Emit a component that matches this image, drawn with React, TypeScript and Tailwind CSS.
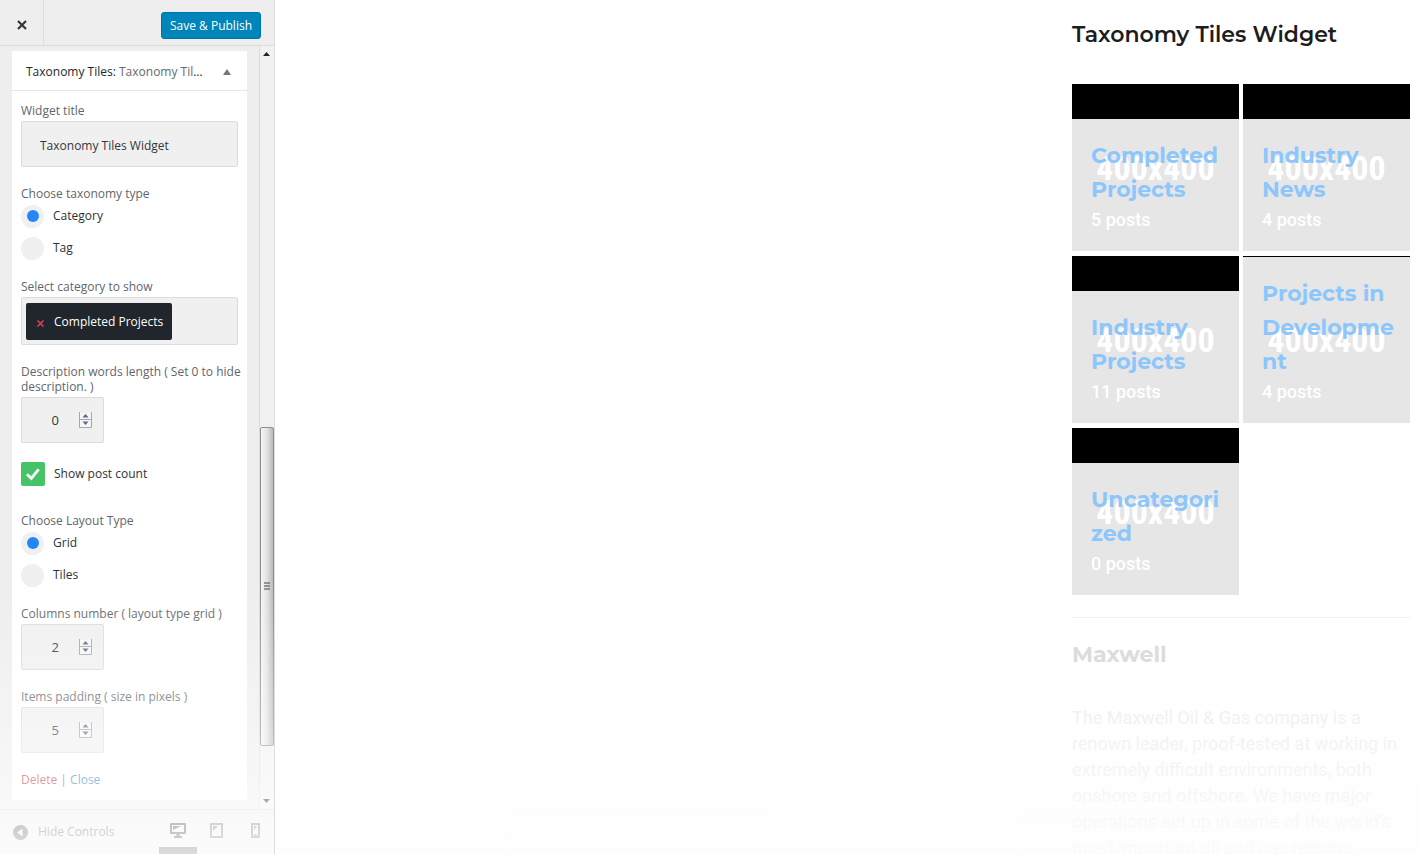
import { useState, type ReactNode } from "react";

const labelClass = "block text-xs leading-[15px] whitespace-pre text-[#5f666c]";
const fieldClass = "rounded-xs border border-[#dcdcdc] bg-[#f0f0f0]";

function Field({ label, htmlFor, children }: { label: string; htmlFor: string; children: ReactNode }) {
  return (
    <div className="flex flex-col gap-[3px]">
      <label htmlFor={htmlFor} className={labelClass}>
        {label}
      </label>
      {children}
    </div>
  );
}

function RadioGroup({ legend, name, options }: { legend: string; name: string; options: string[] }) {
  return (
    <fieldset>
      <legend className={labelClass}>{legend}</legend>
      <div className="flex flex-col gap-2 pt-[3px]">
        {options.map((option, index) => (
          <label key={option} className="flex h-6 items-center gap-[9px] text-xs text-[#2c3338]">
            <input
              type="radio"
              name={name}
              defaultChecked={index === 0}
              className="grid size-[23px] appearance-none place-items-center rounded-full bg-[#f0f0f0] before:size-3 before:rounded-full checked:before:bg-[#2388f5]"
            />
            {option}
          </label>
        ))}
      </div>
    </fieldset>
  );
}

function NumberField({ label, id, value }: { label: string; id: string; value: number }) {
  return (
    <Field label={label} htmlFor={id}>
      <div className={`flex h-[46px] w-[83px] items-center pr-[11px] ${fieldClass}`}>
        <input
          id={id}
          type="number"
          defaultValue={value}
          className="min-w-0 flex-1 bg-transparent pt-0.5 pr-5 text-right text-[13px] text-[#32373c] outline-none [appearance:textfield] [&::-webkit-inner-spin-button]:appearance-none"
        />
        <svg width="13" height="16" viewBox="0 0 13 16" aria-hidden="true">
          <rect x="1" y="1" width="11" height="14" fill="#f6f6f6" />
          <path d="M.5 0v15.5h12V0M0 7.5h13" fill="none" stroke="#a3a8ae" />
          <path d="M3.5 5.5h6l-3-3.5zM3.5 9.5h6l-3 3.5z" fill="#5a6a8c" />
        </svg>
      </div>
    </Field>
  );
}

function ScrollTrack() {
  return (
    <div className="flex w-[15px] shrink-0 flex-col items-center border-l border-[#dcdcdc] bg-[#f1f1f1]" aria-hidden="true">
      <svg className="my-[5px] shrink-0" width="8" height="5" viewBox="0 0 8 5">
        <path d="M0 5h7L3.500 1z" fill="#222" />
      </svg>
      <div className="grow-[367] basis-0" />
      <div className="flex w-full grow-[319] basis-0 items-center justify-center rounded-xs border border-[#8f8f8f] bg-linear-to-r from-[#f6f6f6] via-[#e2e2e2] to-[#b9b9b9]">
        <svg width="6" height="8" viewBox="0 0 6 8">
          <path d="M0 1h6M0 4h6M0 7h6" stroke="#444" />
        </svg>
      </div>
      <div className="grow-[48] basis-0" />
      <svg className="my-[5px] shrink-0" width="8" height="5" viewBox="0 0 8 5">
        <path d="M0 0h7L3.500 4z" fill="#222" />
      </svg>
    </div>
  );
}

function Sidebar() {
  const [title, setTitle] = useState("Taxonomy Tiles Widget");
  return (
    <aside className="relative flex w-[275px] shrink-0 flex-col border-r border-[#ddd] bg-[#eee] font-['Open_Sans','Noto_Sans',sans-serif]">
      <header className="flex h-[46px] shrink-0 items-center justify-between border-b border-[#ddd] pr-[13px]">
        <button aria-label="Close" className="grid h-full w-11 place-items-center border-r border-[#ddd] pt-1">
          <svg width="10" height="10" viewBox="0 0 10 10" fill="none" stroke="#32373c" strokeWidth="2.200">
            <path d="M1 1l8 8M9 1L1 9" />
          </svg>
        </button>
        <button className="mt-[6px] h-[27px] rounded-[3px] border border-[#0073aa] bg-[#0085ba] px-2 text-xs font-medium whitespace-nowrap text-white">
          Save &amp; Publish
        </button>
      </header>

      <div className="flex min-h-0 flex-1">
        <div className="min-w-0 flex-1 overflow-hidden pt-[5px] pr-3 pl-3">
          <section className="bg-white">
            <button className="flex h-10 w-full items-center justify-between border-b border-[#e5e5e5] pt-0.5 pr-4 pl-[14px] text-xs text-[#23282d]">
              <span className="w-[181px] truncate text-left font-medium">
                Taxonomy Tiles: <span className="font-normal text-[#646970]">Taxonomy Tiles Widget</span>
              </span>
              <svg width="8" height="6" viewBox="0 0 8 6">
                <path d="M0 6h8L4 0z" fill="#72777c" />
              </svg>
            </button>
            <form className="flex flex-col gap-[19px] px-[9px] pt-3 pb-[13px]">
              <Field label="Widget title" htmlFor="widget-title">
                <input
                  id="widget-title"
                  value={title}
                  onChange={(event) => setTitle(event.target.value)}
                  className={`h-[46px] w-full px-[18px] pt-0.5 text-xs text-[#32373c] outline-none ${fieldClass}`}
                />
              </Field>
              <RadioGroup legend="Choose taxonomy type" name="taxonomy" options={["Category", "Tag"]} />
              <Field label="Select category to show" htmlFor="category">
                <div className={`flex h-12 items-center px-1 ${fieldClass}`}>
                  <button
                    id="category"
                    type="button"
                    className="flex h-[37px] items-center gap-[10px] rounded-xs bg-[#20262b] pt-0.5 pr-[9px] pl-[11px] text-xs whitespace-nowrap text-white"
                  >
                    <svg className="mt-0.5" width="7" height="7" viewBox="0 0 7 7" stroke="#e0405a" strokeWidth="1.500">
                      <path d="M.5.5l6 6M6.500.5l-6 6" />
                    </svg>
                    Completed Projects
                  </button>
                </div>
              </Field>
              <NumberField label={"Description words length ( Set 0 to hide\ndescription. )"} id="words" value={0} />
              <label className="mb-2 flex h-6 items-center gap-[9px] text-xs text-[#2c3338]">
                <span className="grid">
                  <input
                    type="checkbox"
                    defaultChecked
                    className="peer col-start-1 row-start-1 size-6 appearance-none rounded-xs bg-[#f0f0f0] checked:bg-[#46c267]"
                  />
                  <svg
                    className="pointer-events-none invisible col-start-1 row-start-1 place-self-center peer-checked:visible"
                    width="14"
                    height="13"
                    viewBox="0 0 14 13"
                  >
                    <path d="M0 7.300l2-2 3.200 2.900L11.500.4l2.300 1.500L5.500 12.600z" fill="#fff" />
                  </svg>
                </span>
                Show post count
              </label>
              <RadioGroup legend="Choose Layout Type" name="layout" options={["Grid", "Tiles"]} />
              <NumberField label="Columns number ( layout type grid )" id="columns" value={2} />
              <NumberField label="Items padding ( size in pixels )" id="padding" value={5} />
              <p className="text-xs leading-[15px] text-[#555]">
                <a href="#delete" className="text-[#b0202c]">Delete</a> |{" "}
                <a href="#close" className="text-[#0073aa]">Close</a>
              </p>
            </form>
          </section>
        </div>
        <ScrollTrack />
      </div>

      <footer className="flex h-[45px] shrink-0 items-stretch justify-between border-t border-[#ddd] pl-[13px] text-[#2c3238]">
        <button className="flex items-center gap-[10px] text-xs whitespace-nowrap text-[#50575e]">
          <svg width="15" height="15" viewBox="0 0 15 15">
            <circle cx="7.500" cy="7.500" r="7.500" fill="currentColor" />
            <path d="M9.500 3.500v8L4 7.500z" fill="#eee" />
          </svg>
          Hide Controls
        </button>
        <div className="flex">
          <button aria-label="Desktop preview" className="grid w-[38px] place-items-center border-b-[7px] border-[#444b52] pt-1">
            <svg width="16" height="15" viewBox="0 0 16 15">
              <path fill="currentColor" fillRule="evenodd" d="M1 0h14a1 1 0 0 1 1 1v9a1 1 0 0 1-1 1H9.500v2H12v2H4v-2h2.500v-2H1a1 1 0 0 1-1-1V1a1 1 0 0 1 1-1zm1 2v7h12V2zm1 1h8L3 7z" />
            </svg>
          </button>
          <button aria-label="Tablet preview" className="grid w-[39px] place-items-center border-b-[7px] border-transparent pt-1 text-[#6b7279]">
            <svg width="13" height="15" viewBox="0 0 13 15" fill="none" stroke="currentColor" strokeWidth="2">
              <path d="M1 1h11v13H1z" />
              <path d="M3 3h5L3 8z" fill="currentColor" stroke="none" />
            </svg>
          </button>
          <button aria-label="Phone preview" className="grid w-[38px] place-items-center border-b-[7px] border-transparent pt-1 text-[#6b7279]">
            <svg width="9" height="15" viewBox="0 0 9 15" fill="none" stroke="currentColor" strokeWidth="2">
              <path d="M1 1h7v13H1zM3 12.500h3" />
              <path d="M3 3h3L3 7z" fill="currentColor" stroke="none" />
            </svg>
          </button>
        </div>
      </footer>
      <div className="pointer-events-none absolute inset-x-0 bottom-0 h-[32%] bg-linear-to-b from-white/0 via-white/35 to-white/80" />
    </aside>
  );
}

const tiles = [
  { lines: ["Completed", "Projects"], posts: 5 },
  { lines: ["Industry", "News"], posts: 4 },
  { lines: ["Industry", "Projects"], posts: 11 },
  { lines: ["Projects in", "Developme", "nt"], posts: 4 },
  { lines: ["Uncategori", "zed"], posts: 0 },
];

const headingClass = "font-['Montserrat','Inter',sans-serif] text-[22px] leading-[34px]";

function Preview() {
  return (
    <main className="relative flex min-w-0 flex-1 justify-end overflow-hidden bg-white pr-[9px] font-['Roboto',sans-serif]">
      <div className="w-[338px] pt-[18px]">
        <h2 className={`font-semibold whitespace-nowrap text-[#1c1c1c] ${headingClass}`}>
          Taxonomy Tiles Widget
        </h2>
        <div className="mt-8 grid grid-cols-2 gap-x-1 gap-y-[5px]">
          {tiles.map((tile) => (
            <a key={tile.lines.join("")} href="#posts" className="relative flex aspect-square flex-col bg-black">
              <div className="mt-auto bg-[#e6e6e6] px-[19px] pt-5 pb-[18px]">
                <span
                  aria-hidden="true"
                  className="absolute inset-0 grid place-items-center pt-0.5 font-['Roboto_Condensed','Open_Sans_Condensed','Liberation_Sans_Narrow','Liberation_Sans',sans-serif] text-[34px] font-bold text-white"
                >
                  400x400
                </span>
                <h3 className={`relative font-bold text-[#8dc6fb] ${headingClass}`}>
                  {tile.lines.map((line) => (
                    <span key={line} className="block whitespace-nowrap">{line}</span>
                  ))}
                </h3>
                <p className="relative text-lg leading-[26px] font-medium text-white">{tile.posts} posts</p>
              </div>
            </a>
          ))}
        </div>
        <hr className="mt-[22px] border-[#f1f1f1]" />
        <h2 className={`mt-5 font-bold text-[#dcdcdc] ${headingClass}`}>Maxwell</h2>
        <p className="mt-[33px] text-lg leading-[26px] whitespace-nowrap text-[#eeeff0]">
          The Maxwell Oil &amp; Gas company is a<br />
          renown leader, proof-tested at working in<br />
          extremely difficult environments, both<br />
          onshore and offshore. We have major<br />
          operations set up in some of the world’s<br />
          most important oil and gas regions.
        </p>
      </div>
      <div className="pointer-events-none absolute inset-x-0 bottom-0 h-44 bg-linear-to-b from-white/0 to-[#fdfdfd]/80" />
    </main>
  );
}

export default function App() {
  return (
    <div className="flex h-screen overflow-hidden bg-white">
      <Sidebar />
      <Preview />
    </div>
  );
}
